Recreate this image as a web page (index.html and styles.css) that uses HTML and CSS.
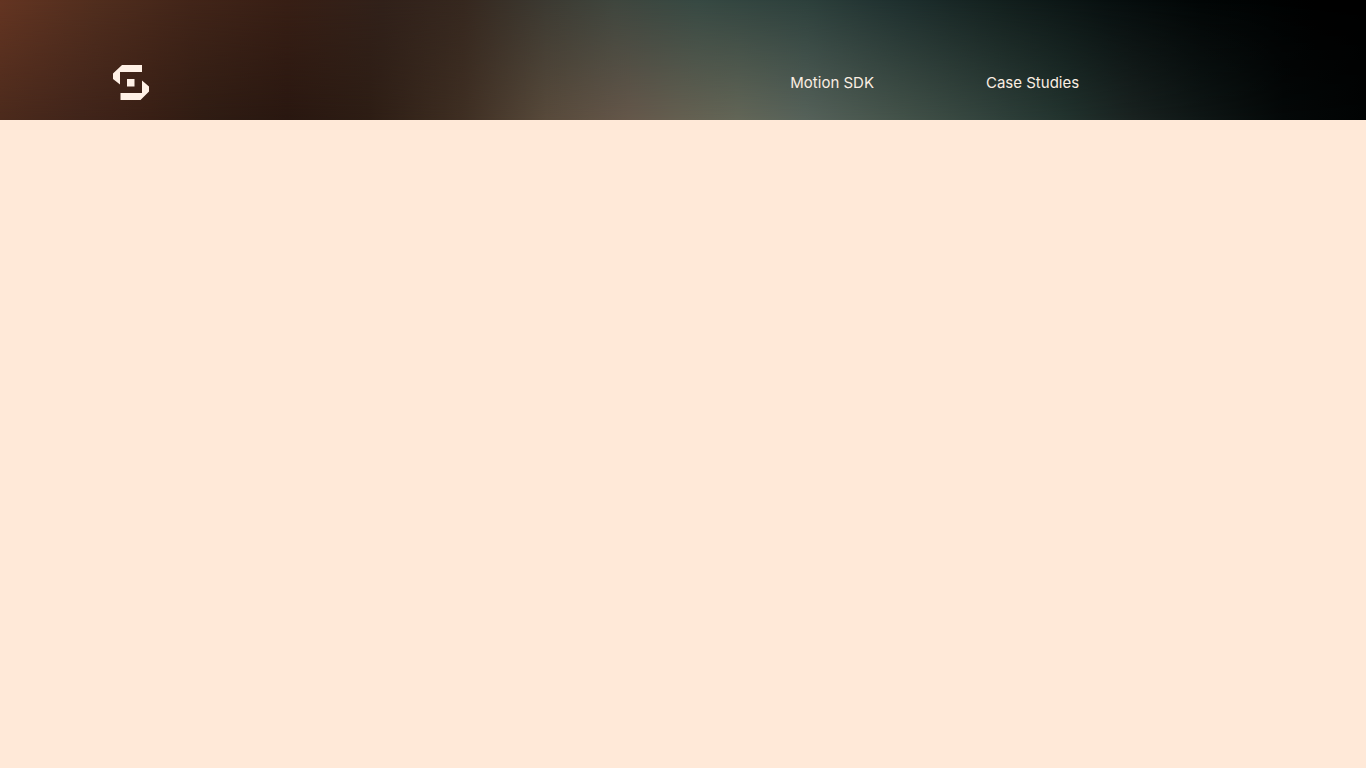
FILE: index.html
```html
<!DOCTYPE html>
<html lang="en">
<head>
  <meta charset="utf-8">
  <meta name="viewport" content="width=device-width, initial-scale=1">
  <title>Motion SDK</title>
  <link rel="stylesheet" href="styles.css">
</head>
<body>
  <header class="site-header">
    <a class="logo" href="#" aria-label="Home">
      <svg class="logo-mark" viewBox="0 0 36 35" aria-hidden="true">
        <path d="M9 0H29V7H7V19.500L0 14V8.500Z"/>
        <path d="M29 15.500L36 21.500V26.500L27.500 35H7.500V28H29Z"/>
        <path d="M14 14H21.500V21.500H14Z"/>
      </svg>
    </a>
    <nav class="nav" aria-label="Main">
      <a class="nav-link" href="#">Motion SDK</a>
      <a class="nav-link" href="#">Case Studies</a>
    </nav>
  </header>
  <main class="content"></main>
</body>
</html>
```

FILE: styles.css
```css
* {
  box-sizing: border-box;
}

body {
  margin: 0;
  min-height: 100vh;
  background: #ffe9d8;
  font-family: Inter, "Liberation Sans", sans-serif;
}

.site-header {
  position: relative;
  isolation: isolate;
  display: flex;
  align-items: center;
  justify-content: space-between;
  padding: 65px 21% 20px 113px;
  background: linear-gradient(90deg, #643522 0%, #512e1e 7%, #422519 14%, #381f15 21%, #31211a 28%, #36281f 34%, #3c3a32 40%, #3f463e 45%, #374943 51%, #2d403c 59%, #1e2f2e 66%, #13201e 73%, #081010 81%, #020606 88%, #000 98%);
}

/* Warmer lower glow, fading in towards the bottom edge */
.site-header::before {
  content: "";
  position: absolute;
  inset: 0;
  z-index: -1;
  background: linear-gradient(90deg, #4b2a1c 0%, #40241a 6%, #381f15 11%, #2f1c13 15%, #291710 21%, #2d1d14 27%, #3f2f23 34%, #584a3b 40%, #65574a 46%, #656051 50%, #636657 54%, #56625a 59%, #435249 66%, #30413b 73%, #22332e 78%, #192220 83%, #0e1615 88%, #040808 94%, #010303 100%);
  mask-image: linear-gradient(transparent, #000);
}

.logo {
  display: block;
}

.logo-mark {
  display: block;
  width: 36px;
  height: 35px;
  fill: #fff1e6;
}

.nav {
  display: flex;
  gap: 112px;
}

.nav-link {
  color: #fbeee2;
  font-size: 15px;
  line-height: 20px;
  text-decoration: none;
}
```
